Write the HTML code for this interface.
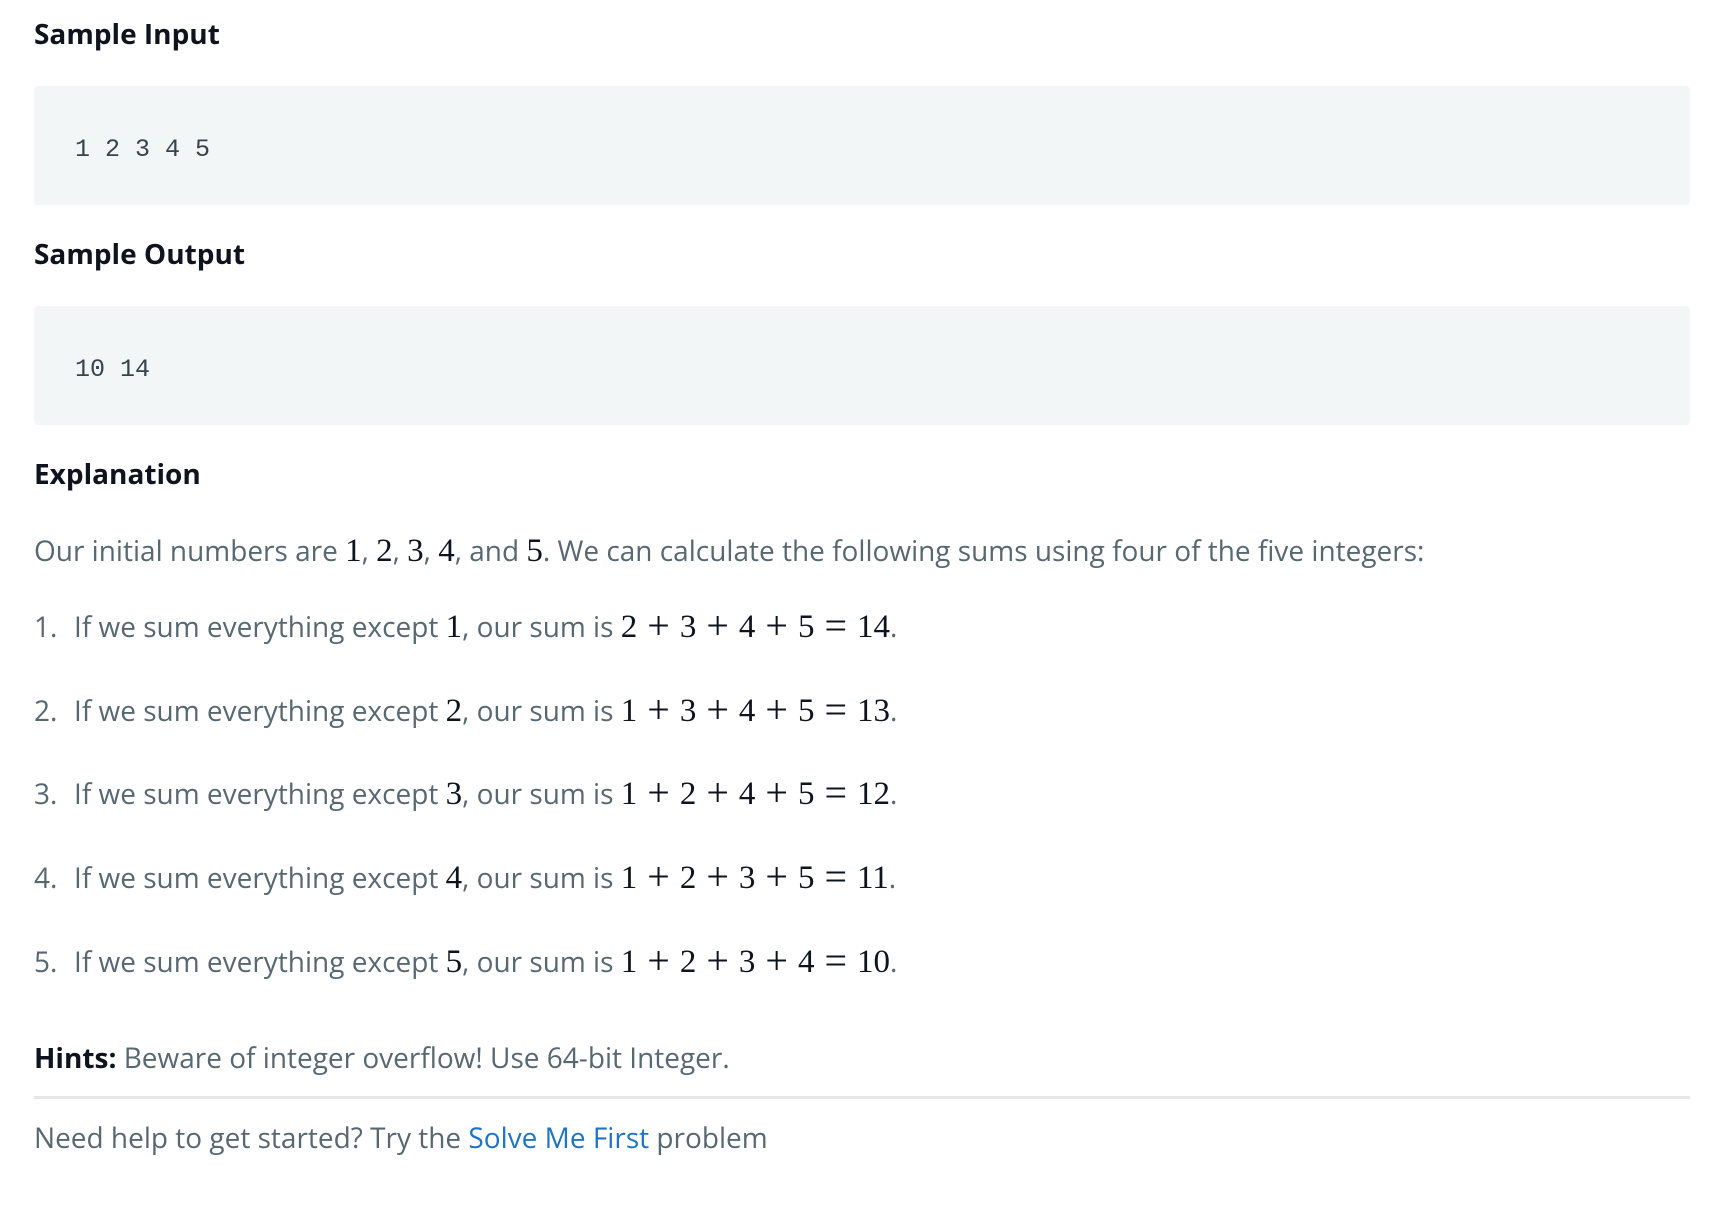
<!DOCTYPE html>
<html><head><meta charset="utf-8"><style>
body{margin:0;width:1728px;height:1222px;background:#fff;position:relative;overflow:hidden;font-family:"Open Sans","Liberation Sans",sans-serif;color:#576871}
.a{position:absolute;left:34px;white-space:nowrap;line-height:40px;font-size:28px}
h3{position:absolute;left:34px;margin:0;font-size:28px;line-height:40px;color:#0e141e;font-weight:bold}
.box{position:absolute;left:34px;width:1656px;height:119px;background:#f3f6f7;border-radius:4px}
.box span{position:absolute;left:41px;top:44px;font-family:"Liberation Mono",monospace;font-size:25px;line-height:40px;color:#39424e}
.m{font-family:"Liberation Serif",serif;font-size:33px;color:#0e141e}
.o{margin:0 10px;font-size:40px;line-height:20px;vertical-align:-2px}
.n{display:inline-block;width:40px}
a{color:#1f75c1;text-decoration:none}
hr{position:absolute;left:34px;top:1096px;width:1656px;margin:0;border:0;height:3px;background:#e7e7e7}
</style></head><body>
<h3 style="top:14px">Sample Input</h3>
<div class="box" style="top:86px"><span>1 2 3 4 5</span></div>
<h3 style="top:234px">Sample Output</h3>
<div class="box" style="top:306px"><span>10 14</span></div>
<h3 style="top:454px">Explanation</h3>
<div class="a" style="top:531px">Our initial numbers are <span class="m">1</span>, <span class="m">2</span>, <span class="m">3</span>, <span class="m">4</span>, and <span class="m">5</span>. We can calculate the following sums using four of the five integers:</div>
<div class="a" style="top:607px"><span class="n">1.</span>If we sum everything except <span class="m">1</span>, our sum is <span class="m">2<span class="o">+</span>3<span class="o">+</span>4<span class="o">+</span>5<span class="o">=</span>14</span>.</div>
<div class="a" style="top:691px"><span class="n">2.</span>If we sum everything except <span class="m">2</span>, our sum is <span class="m">1<span class="o">+</span>3<span class="o">+</span>4<span class="o">+</span>5<span class="o">=</span>13</span>.</div>
<div class="a" style="top:774px"><span class="n">3.</span>If we sum everything except <span class="m">3</span>, our sum is <span class="m">1<span class="o">+</span>2<span class="o">+</span>4<span class="o">+</span>5<span class="o">=</span>12</span>.</div>
<div class="a" style="top:858px"><span class="n">4.</span>If we sum everything except <span class="m">4</span>, our sum is <span class="m">1<span class="o">+</span>2<span class="o">+</span>3<span class="o">+</span>5<span class="o">=</span>11</span>.</div>
<div class="a" style="top:942px"><span class="n">5.</span>If we sum everything except <span class="m">5</span>, our sum is <span class="m">1<span class="o">+</span>2<span class="o">+</span>3<span class="o">+</span>4<span class="o">=</span>10</span>.</div>
<div class="a" style="top:1038px"><b style="color:#0e141e">Hints:</b> Beware of integer overflow! Use 64-bit Integer.</div>
<hr>
<div class="a" style="top:1118px">Need help to get started? Try the <a>Solve Me First</a> problem</div>
</body></html>
